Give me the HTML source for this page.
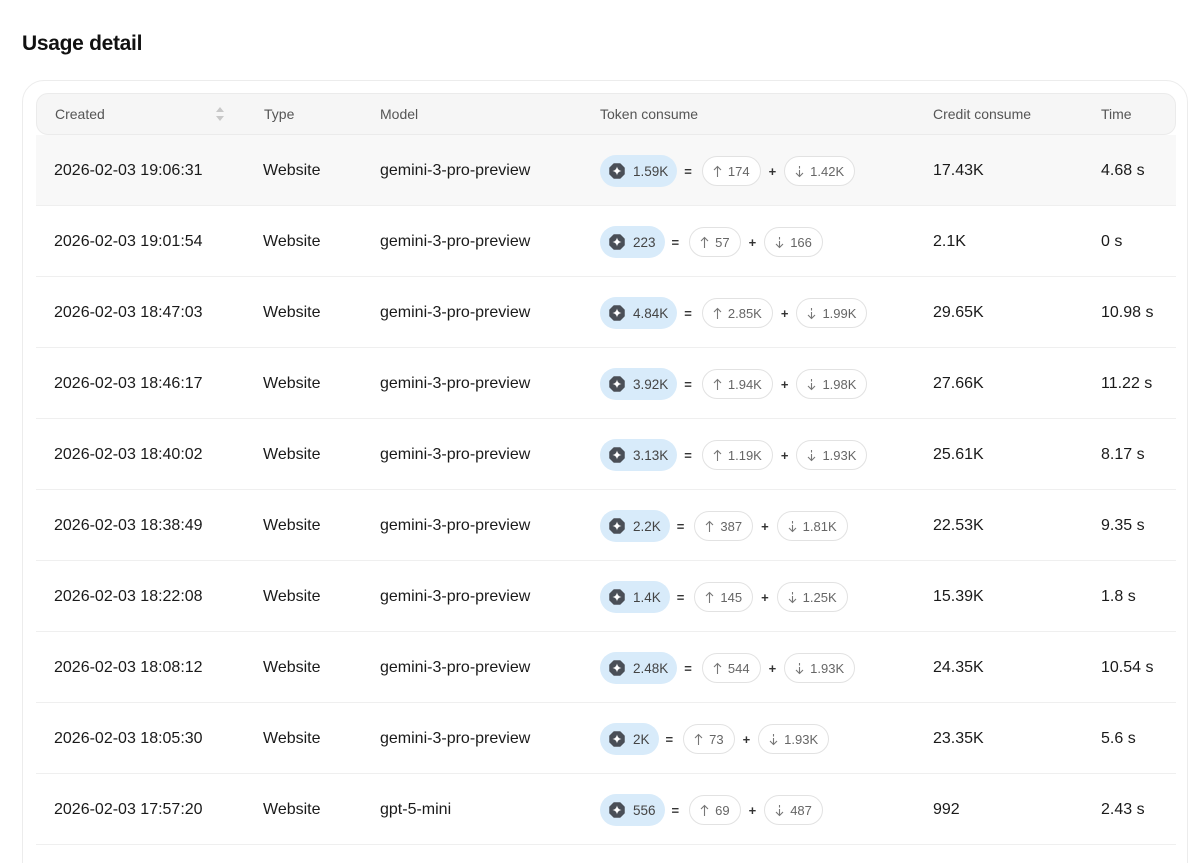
<!DOCTYPE html>
<html><head><meta charset="utf-8"><style>
*{box-sizing:border-box;margin:0;padding:0}
html,body{width:1199px;height:863px;overflow:hidden}
body{background:#fff;font-family:"Liberation Sans",sans-serif;color:#1a1a1a;position:relative}
h1{position:absolute;left:22px;top:32px;font-size:21px;font-weight:700;letter-spacing:-0.3px;color:#111}
.card{position:absolute;left:22px;top:80px;width:1166px;height:820px;border:1.5px solid #ececec;border-radius:22px}
.head{position:absolute;left:36px;top:93px;width:1140px;height:42px;background:#f6f6f6;border:1px solid #ebebeb;border-radius:12px;font-size:14px;color:#555}
.head span,.row>span{position:absolute;top:50%;transform:translateY(-50%);white-space:nowrap}
.row{position:absolute;left:36px;width:1140px;height:71px;border-bottom:1.5px solid #efefef;font-size:16px}
.row>span{margin-top:1px}
.tok{display:flex;align-items:center;font-size:13px;color:#666}
.bp{background:#d8ebfa;border-radius:16px;height:32px;padding:0 9px 0 9px;display:flex;align-items:center;color:#444;font-size:13.5px}
.ic{width:16px;height:16px;margin-right:8px}
.op{margin:0 8px;color:#333;font-size:13px;font-weight:700}
.op.e{margin:0 10px 0 7px}
.wp{border:1px solid #e2e2e2;border-radius:16px;height:30px;padding:0 10px;display:flex;align-items:center;background:#fff}
.ar{margin-right:6px;color:#777}
.sort{position:absolute;left:178px;top:12px}
</style></head><body>
<h1>Usage detail</h1>
<div class="card"></div>
<div class="head">
<span style="left:18px">Created</span>
<svg class="sort" width="10" height="16" viewBox="0 0 10 16"><path d="M5 1L9 6H1z" fill="#c8c8c8"/><path d="M5 15L9 10H1z" fill="#c8c8c8"/></svg>
<span style="left:227px">Type</span>
<span style="left:343px">Model</span>
<span style="left:563px">Token consume</span>
<span style="left:896px">Credit consume</span>
<span style="left:1064px">Time</span>
</div>
<div id="rows"></div>
<script>
var d=[["19:06:31","gemini-3-pro-preview","1.59K","174","1.42K","17.43K","4.68 s"],
["19:01:54","gemini-3-pro-preview","223","57","166","2.1K","0 s"],
["18:47:03","gemini-3-pro-preview","4.84K","2.85K","1.99K","29.65K","10.98 s"],
["18:46:17","gemini-3-pro-preview","3.92K","1.94K","1.98K","27.66K","11.22 s"],
["18:40:02","gemini-3-pro-preview","3.13K","1.19K","1.93K","25.61K","8.17 s"],
["18:38:49","gemini-3-pro-preview","2.2K","387","1.81K","22.53K","9.35 s"],
["18:22:08","gemini-3-pro-preview","1.4K","145","1.25K","15.39K","1.8 s"],
["18:08:12","gemini-3-pro-preview","2.48K","544","1.93K","24.35K","10.54 s"],
["18:05:30","gemini-3-pro-preview","2K","73","1.93K","23.35K","5.6 s"],
["17:57:20","gpt-5-mini","556","69","487","992","2.43 s"]];
var ic='<svg class="ic" viewBox="0 0 16 16"><path d="M5 1h6l4 4v6l-4 4H5l-4-4V5z" fill="#4a4f57" stroke="#4a4f57" stroke-linejoin="round" stroke-width="1.5"/><path d="M8 3.5Q8.6 7.4 12.5 8Q8.6 8.6 8 12.5Q7.4 8.6 3.5 8Q7.4 7.4 8 3.5z" fill="#fff"/></svg>';
var up='<svg class="ar" width="9" height="13" viewBox="0 0 9 13"><path d="M4.5 12V1.5M1 5l3.5-3.5L8 5" fill="none" stroke="#777" stroke-width="1.1"/></svg>';
var dn='<svg class="ar" width="9" height="13" viewBox="0 0 9 13"><path d="M4.5 1v2.5M4.5 5v6.5M1 8l3.5 3.5L8 8" fill="none" stroke="#777" stroke-width="1.1"/></svg>';
var h='';
d.forEach(function(r,i){
h+='<div class="row" style="top:'+(135+i*71)+'px;'+(i==0?'background:#f8f8f8;':'')+'">'+
'<span style="left:18px">2026-02-03 '+r[0]+'</span>'+
'<span style="left:227px">Website</span>'+
'<span style="left:344px">'+r[1]+'</span>'+
'<span class="tok" style="left:564px"><div class="bp">'+ic+r[2]+'</div><b class="op e">=</b><div class="wp">'+up+r[3]+'</div><b class="op">+</b><div class="wp">'+dn+r[4]+'</div></span>'+
'<span style="left:897px">'+r[5]+'</span>'+
'<span style="left:1065px">'+r[6]+'</span></div>';
});
document.getElementById('rows').innerHTML=h;
</script>
</body></html>
